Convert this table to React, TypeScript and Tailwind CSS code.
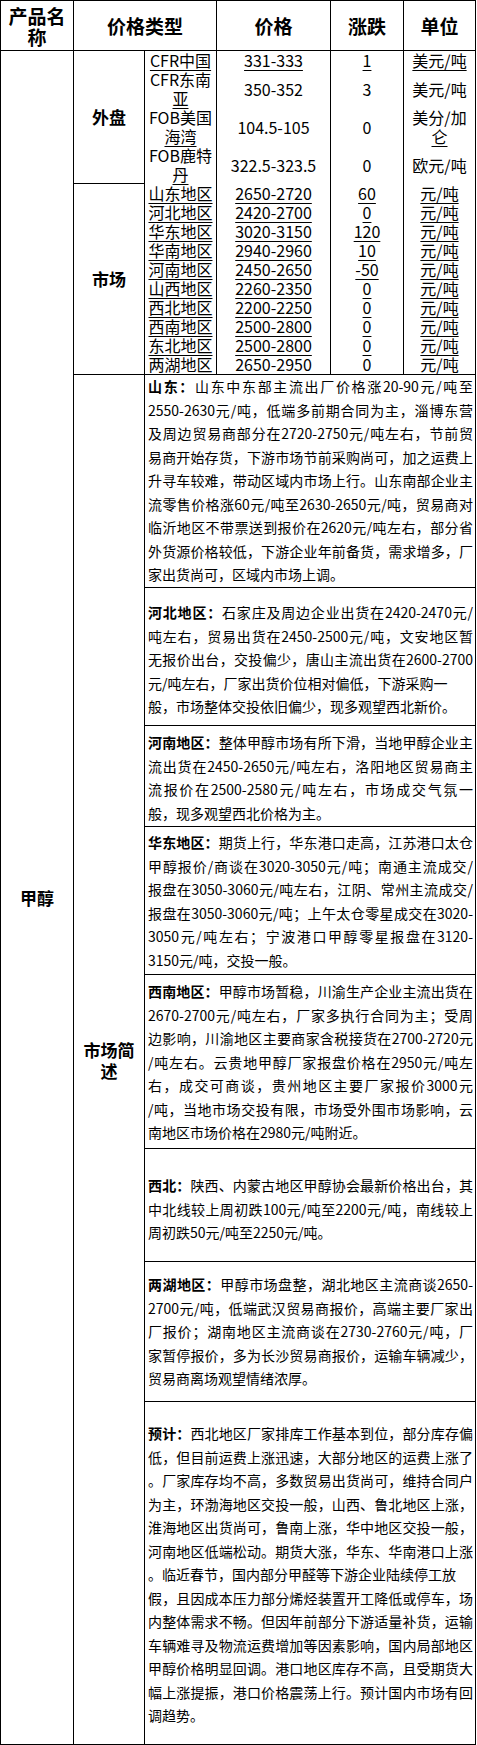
import React from "react";

// underlined text, as in the original table cells
const U = ({ children }: { children: React.ReactNode }) => (
  <span className="underline decoration-1 underline-offset-[3px]">{children}</span>
);

interface PriceRow {
  name: React.ReactNode;
  price: React.ReactNode;
  change: React.ReactNode;
  unit: React.ReactNode;
  tall?: boolean;
}

const outerRows: PriceRow[] = [
  { name: <U>CFR中国</U>, price: <U>331-333</U>, change: <U>1</U>, unit: <U>美元/吨</U> },
  {
    name: (
      <>
        CFR东南
        <br />
        <U>亚</U>
      </>
    ),
    price: "350-352",
    change: "3",
    unit: "美元/吨",
    tall: true,
  },
  {
    name: (
      <>
        FOB美国
        <br />
        <U>海湾</U>
      </>
    ),
    price: "104.5-105",
    change: "0",
    unit: (
      <>
        美分/加
        <br />
        <U>仑</U>
      </>
    ),
    tall: true,
  },
  {
    name: (
      <>
        FOB鹿特
        <br />
        <U>丹</U>
      </>
    ),
    price: "322.5-323.5",
    change: "0",
    unit: "欧元/吨",
    tall: true,
  },
];

const marketData = [
  ["山东地区", "2650-2720", "60"],
  ["河北地区", "2420-2700", "0"],
  ["华东地区", "3020-3150", "120"],
  ["华南地区", "2940-2960", "10"],
  ["河南地区", "2450-2650", "-50"],
  ["山西地区", "2260-2350", "0"],
  ["西北地区", "2200-2250", "0"],
  ["西南地区", "2500-2800", "0"],
  ["东北地区", "2500-2800", "0"],
  ["两湖地区", "2650-2950", "0"],
];

const marketRows: PriceRow[] = marketData.map(([n, p, c]) => ({
  name: <U>{n}</U>,
  price: <U>{p}</U>,
  change: <U>{c}</U>,
  unit: <U>元/吨</U>,
}));

interface Para {
  label: string;
  lines: string[];
  short: number[]; // lines that are not stretched to the full width
  box: string;
}

const paras: Para[] = [
  {
    label: "山东：",
    lines: [
      "山东中东部主流出厂价格涨20-90元/吨至",
      "2550-2630元/吨，低端多前期合同为主，淄博东营",
      "及周边贸易商部分在2720-2750元/吨左右，节前贸",
      "易商开始存货，下游市场节前采购尚可，加之运费上",
      "升寻车较难，带动区域内市场上行。山东南部企业主",
      "流零售价格涨60元/吨至2630-2650元/吨，贸易商对",
      "临沂地区不带票送到报价在2620元/吨左右，部分省",
      "外货源价格较低，下游企业年前备货，需求增多，厂",
      "家出货尚可，区域内市场上调。",
    ],
    short: [8],
    box: "h-[213px] pt-0 border-b",
  },
  {
    label: "河北地区：",
    lines: [
      "石家庄及周边企业出货在2420-2470元/",
      "吨左右，贸易出货在2450-2500元/吨，文安地区暂",
      "无报价出台，交投偏少，唐山主流出货在2600-2700",
      "元/吨左右，厂家出货价位相对偏低，下游采购一",
      "般，市场整体交投依旧偏少，现多观望西北新价。",
    ],
    short: [3, 4],
    box: "h-[138px] pt-[13px] border-b",
  },
  {
    label: "河南地区：",
    lines: [
      "整体甲醇市场有所下滑，当地甲醇企业主",
      "流出货在2450-2650元/吨左右，洛阳地区贸易商主",
      "流报价在2500-2580元/吨左右，市场成交气氛一",
      "般，现多观望西北价格为主。",
    ],
    short: [3],
    box: "h-[101px] pt-[5px] border-b",
  },
  {
    label: "华东地区：",
    lines: [
      "期货上行，华东港口走高，江苏港口太仓",
      "甲醇报价/商谈在3020-3050元/吨；南通主流成交/",
      "报盘在3050-3060元/吨左右，江阴、常州主流成交/",
      "报盘在3050-3060元/吨；上午太仓零星成交在3020-",
      "3050元/吨左右；宁波港口甲醇零星报盘在3120-",
      "3150元/吨，交投一般。",
    ],
    short: [5],
    box: "h-[148px] pt-[4px] border-b",
  },
  {
    label: "西南地区：",
    lines: [
      "甲醇市场暂稳，川渝生产企业主流出货在",
      "2670-2700元/吨左右，厂家多执行合同为主；受周",
      "边影响，川渝地区主要商家含税接货在2700-2720元",
      "/吨左右。云贵地甲醇厂家报盘价格在2950元/吨左",
      "右，成交可商谈，贵州地区主要厂家报价3000元",
      "/吨，当地市场交投有限，市场受外围市场影响，云",
      "南地区市场价格在2980元/吨附近。",
    ],
    short: [6],
    box: "h-[174px] pt-[5px] border-b",
  },
  {
    label: "西北：",
    lines: [
      "陕西、内蒙古地区甲醇协会最新价格出台，其",
      "中北线较上周初跌100元/吨至2200元/吨，南线较上",
      "周初跌50元/吨至2250元/吨。",
    ],
    short: [2],
    box: "h-[113px] pt-[25px] border-b",
  },
  {
    label: "两湖地区：",
    lines: [
      "甲醇市场盘整，湖北地区主流商谈2650-",
      "2700元/吨，低端武汉贸易商报价，高端主要厂家出",
      "厂报价；湖南地区主流商谈在2730-2760元/吨，厂",
      "家暂停报价，多为长沙贸易商报价，运输车辆减少，",
      "贸易商离场观望情绪浓厚。",
    ],
    short: [4],
    box: "h-[140px] pt-[11px] border-b",
  },
  {
    label: "预计：",
    lines: [
      "西北地区厂家排库工作基本到位，部分库存偏",
      "低，但目前运费上涨迅速，大部分地区的运费上涨了",
      "。厂家库存均不高，多数贸易出货尚可，维持合同户",
      "为主，环渤海地区交投一般，山西、鲁北地区上涨，",
      "淮海地区出货尚可，鲁南上涨，华中地区交投一般，",
      "河南地区低端松动。期货大涨，华东、华南港口上涨",
      "。临近春节，国内部分甲醛等下游企业陆续停工放",
      "假，且因成本压力部分烯烃装置开工降低或停车，场",
      "内整体需求不畅。但因年前部分下游适量补货，运输",
      "车辆难寻及物流运费增加等因素影响，国内局部地区",
      "甲醇价格明显回调。港口地区库存不高，且受期货大",
      "幅上涨提振，港口价格震荡上行。预计国内市场有回",
      "调趋势。",
    ],
    short: [6, 12],
    box: "h-[342px] pt-[20px]",
  },
];

// centred table cell; the inner div keeps <br /> line breaks together
const Cell = ({ className, children }: { className: string; children: React.ReactNode }) => (
  <div className={`flex items-center justify-center text-center ${className}`}>
    <div>{children}</div>
  </div>
);

const PriceLine = ({ row }: { row: PriceRow }) => (
  <div className={`flex ${row.tall ? "h-[38px]" : "h-[19px]"} text-[16px] leading-[19px]`}>
    <Cell className="w-[72px] border-r border-black">{row.name}</Cell>
    <Cell className="w-[114px] border-r border-black">{row.price}</Cell>
    <Cell className="w-[73px] border-r border-black">{row.change}</Cell>
    <Cell className="w-[71px]">{row.unit}</Cell>
  </div>
);

const Paragraph = ({ p }: { p: Para }) => (
  <div className={`${p.box} border-black pl-[3px] pr-[2px] text-[14px]`}>
    {p.lines.map((line, i) => (
      <div
        key={i}
        className={`h-[23.5px] leading-[23.5px] whitespace-nowrap ${
          p.short.includes(i) ? "text-left" : "text-justify [text-align-last:justify]"
        }`}
      >
        {i === 0 && <span className="font-bold">{p.label}</span>}
        {line}
      </div>
    ))}
  </div>
);

export default function App() {
  return (
    <div className="w-[477px] bg-white text-black font-['Noto_Sans_CJK_SC',sans-serif]">
      <div className="w-[476px] border border-black">
        {/* header */}
        <div className="flex h-[50px] border-b border-black text-[19px] font-bold leading-[21px]">
          <Cell className="w-[73px] border-r border-black">
            产品名
            <br />称
          </Cell>
          <Cell className="w-[143px] border-r border-black">价格类型</Cell>
          <Cell className="w-[114px] border-r border-black">价格</Cell>
          <Cell className="w-[73px] border-r border-black">涨跌</Cell>
          <Cell className="w-[71px]">单位</Cell>
        </div>

        <div className="flex">
          <Cell className="w-[73px] border-r border-black text-[17px] font-bold">甲醇</Cell>

          <div className="flex flex-1 flex-col">
            {/* 外盘 */}
            <div className="flex">
              <Cell className="w-[71px] border-r border-b border-black text-[17px] font-bold">外盘</Cell>
              <div className="flex flex-col">
                {outerRows.map((r, i) => (
                  <PriceLine key={i} row={r} />
                ))}
              </div>
            </div>

            {/* 市场 */}
            <div className="flex">
              <Cell className="w-[71px] border-r border-black text-[17px] font-bold">市场</Cell>
              <div className="flex flex-col">
                {marketRows.map((r, i) => (
                  <PriceLine key={i} row={r} />
                ))}
              </div>
            </div>

            {/* 市场简述 */}
            <div className="flex border-t border-black">
              <Cell className="w-[71px] border-r border-black text-[17px] font-bold leading-[21px]">
                市场简
                <br />述
              </Cell>
              <div className="flex flex-1 flex-col">
                {paras.map((p, i) => (
                  <Paragraph key={i} p={p} />
                ))}
              </div>
            </div>
          </div>
        </div>
      </div>
    </div>
  );
}
